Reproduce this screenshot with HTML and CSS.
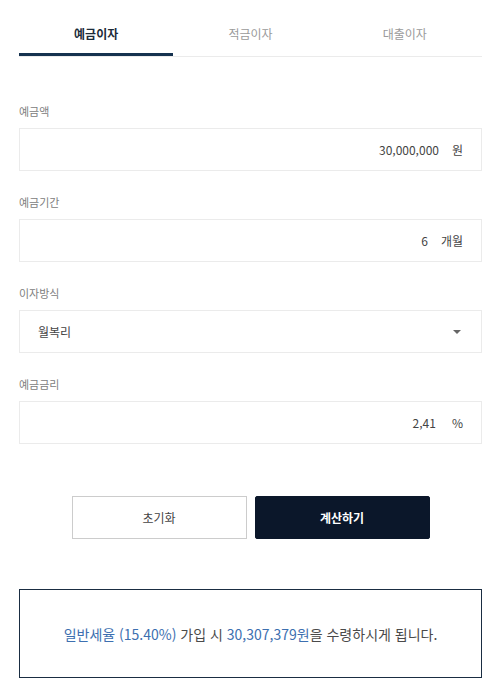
FILE: index.html
```html
<!DOCTYPE html>
<html lang="ko">
<head>
    <meta charset="UTF-8">
    <meta name="viewport" content="width=device-width, initial-scale=1.0">
    <title>이자계산기</title>
    <link rel="stylesheet" href="styles.css">
</head>
<body>

    <div class="calc">
        <ul class="tabs">
            <li class="tab active">예금이자</li>
            <li class="tab">적금이자</li>
            <li class="tab">대출이자</li>
        </ul>

        <form class="calc-form">
            <div class="field">
                <label>예금액</label>
                <div class="box">
                    <span class="value">30,000,000</span>
                    <span class="unit">원</span>
                </div>
            </div>

            <div class="field">
                <label>예금기간</label>
                <div class="box">
                    <span class="value">6</span>
                    <span class="unit">개월</span>
                </div>
            </div>

            <div class="field">
                <label>이자방식</label>
                <div class="box select">
                    <span class="option">월복리</span>
                    <span class="caret"></span>
                </div>
            </div>

            <div class="field">
                <label>예금금리</label>
                <div class="box">
                    <span class="value">2,41</span>
                    <span class="unit pct">%</span>
                </div>
            </div>

            <div class="buttons">
                <button type="button" class="btn-reset">초기화</button>
                <button type="button" class="btn-calc">계산하기</button>
            </div>
        </form>

        <div class="result">
            <p><span class="blue">일반세율 (15.40%)</span> 가입 시 <span class="blue">30,307,379원</span>을 수령하시게 됩니다.</p>
        </div>
    </div>

</body>
</html>
```

FILE: styles.css
```css
body {
    margin: 0;
    background: #fff;
    font-family: "Noto Sans CJK KR", "Noto Sans", sans-serif;
    color: #333;
}
.calc {
    padding: 0 15px 0 19px;
}
.tabs {
    list-style: none;
    margin: 0;
    padding: 0;
    display: flex;
    border-bottom: 1px solid #ebebeb;
}
.tab {
    flex: 1;
    text-align: center;
    font-size: 12px;
    color: #9a9a9a;
    height: 56px;
    line-height: 67px;
    box-sizing: border-box;
}
.tab.active {
    color: #1c2b3a;
    font-weight: bold;
    border-bottom: 3px solid #15324f;
    margin-bottom: -2px;
}
.calc-form {
    padding-top: 46px;
}
.field {
    margin-bottom: 23px;
}
.field label {
    display: block;
    font-size: 11px;
    color: #808080;
    line-height: 16px;
    margin-bottom: 9px;
}
.box {
    height: 43px;
    border: 1px solid #ebebeb;
    box-sizing: border-box;
    display: flex;
    align-items: center;
    justify-content: flex-end;
    padding: 0 18px 0 20px;
    font-size: 12px;
    color: #444;
}
.box .unit {
    margin-left: 13px;
}
.box .unit.pct {
    margin-left: 16px;
}
.box.select {
    justify-content: space-between;
    padding-left: 18px;
}
.caret {
    width: 0;
    height: 0;
    border-left: 4px solid transparent;
    border-right: 4px solid transparent;
    border-top: 4px solid #666;
    margin-right: 2px;
}
.buttons {
    display: flex;
    justify-content: center;
    gap: 8px;
    padding-top: 29px;
}
.buttons button {
    width: 175px;
    height: 43px;
    font-family: inherit;
    font-size: 12px;
    cursor: pointer;
}
.btn-reset {
    background: #fff;
    border: 1px solid #ccc;
    color: #444;
}
.btn-calc {
    background: #0b172a;
    border: 1px solid #0b172a;
    color: #fff;
    font-weight: bold;
    border-radius: 2px;
}
.result {
    margin-top: 50px;
    height: 89px;
    border: 1px solid #1a2d42;
    box-sizing: border-box;
    display: flex;
    align-items: center;
    justify-content: center;
}
.result p {
    margin: 0;
    font-size: 14px;
    color: #4a4a4a;
}
.result .blue {
    color: #3d6fb0;
}
```
